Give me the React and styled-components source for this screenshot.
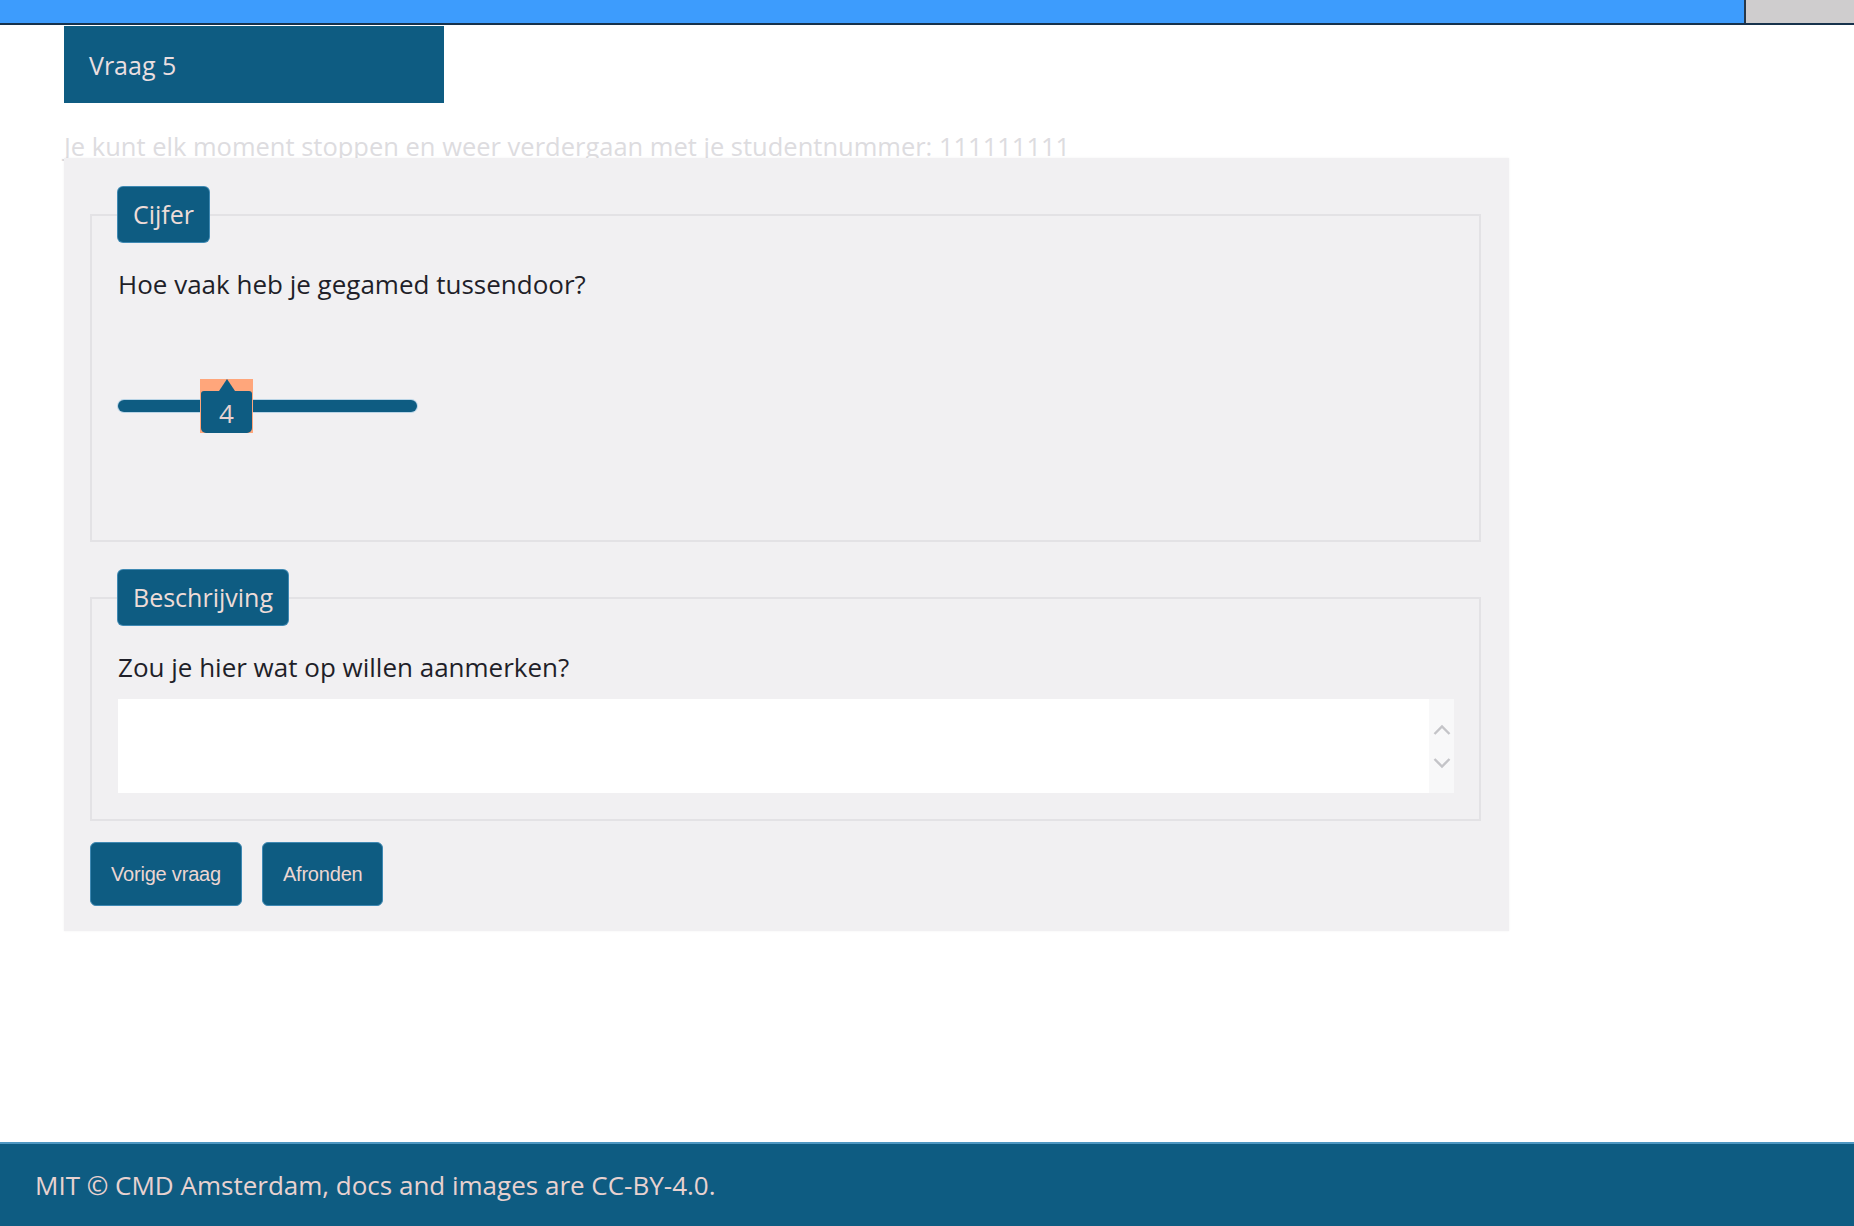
import React from "react";
import styled, { createGlobalStyle } from "styled-components";

const Global = createGlobalStyle`
  html, body { margin: 0; padding: 0; background: #ffffff; }
  body { font-family: "Open Sans", "Noto Sans", Arial, sans-serif; }
  * { box-sizing: border-box; }
`;

const BLUE = "#0e5c82";

const Page = styled.div`
  min-height: 100vh;
  display: flex;
  flex-direction: column;
`;

const Progress = styled.div`
  display: flex;
  height: 25px;
  border-bottom: 2px solid #17324c;
`;

const ProgressFill = styled.div`
  background: #3d9cfd;
  border-right: 2px solid #27384a;
`;

const ProgressRest = styled.div`
  flex: 1;
  background: #cfcdce;
`;

const Main = styled.main`
  padding: 0 0 0 64px;
  display: flex;
  flex-direction: column;
  align-items: flex-start;
`;

const QuestionHeader = styled.div`
  width: 380px;
  height: 77px;
  background: ${BLUE};
  color: #eadfe0;
  font-size: 25px;
  display: flex;
  align-items: center;
  padding-left: 25px;
  margin-top: 1px;
`;

const Notice = styled.p`
  margin: 25px 0 0;
  height: 30px;
  line-height: 36px;
  font-size: 25.5px;
  color: #dddcdf;
  white-space: nowrap;
`;

const Panel = styled.section`
  position: relative;
  width: 1445px;
  background: #f1f0f2;
  padding: 29px 28px 25px 26px;
  box-shadow: 0 0 2px rgba(0, 0, 0, 0.06);
`;

const Fieldset = styled.fieldset`
  margin: ${(p) => (p.$first ? "0" : "28px 0 0")};
  border: 2px solid #e3e2e5;
  padding: 24px 25px ${(p) => p.$bottom}px 26px;
  min-width: 0;
`;

const Legend = styled.legend`
  background: ${BLUE};
  color: #eedcd8;
  font-size: 25px;
  line-height: 35px;
  padding: 10px 15px;
  border-radius: 5px;
  box-shadow: 0 0 0 1px #3f89b3;
  margin: 0;
`;

const Question = styled.p`
  margin: 0;
  font-size: 26px;
  line-height: 36px;
  color: #1f1f29;
`;

const SliderArea = styled.div`
  margin-top: 77px;
  height: 54px;
  width: 299px;
  display: flex;
  align-items: center;
  position: relative;
`;

const Track = styled.div`
  width: 100%;
  height: 12px;
  border-radius: 6px;
  background: ${BLUE};
  box-shadow: 0 0 0 1px rgba(80, 160, 210, 0.35);
`;

const Thumb = styled.div`
  position: absolute;
  top: 0;
  width: 53px;
  height: 54px;
  background: #ffa67b;
  display: flex;
  flex-direction: column;
  justify-content: flex-end;
  align-items: center;
`;

const ThumbArrow = styled.div`
  width: 0;
  height: 0;
  border-left: 8px solid transparent;
  border-right: 8px solid transparent;
  border-bottom: 12px solid ${BLUE};
`;

const ThumbBox = styled.div`
  width: 51px;
  height: 42px;
  background: ${BLUE};
  border-radius: 3px 3px 5px 5px;
  color: #e8d2d0;
  font-size: 26px;
  display: flex;
  align-items: center;
  justify-content: center;
  padding-top: 2px;
`;

const TextareaWrap = styled.div`
  margin-top: 14px;
  height: 94px;
  display: flex;
  background: #ffffff;
`;

const TextArea = styled.textarea`
  flex: 1;
  border: none;
  outline: none;
  resize: none;
  background: transparent;
  font-family: inherit;
  font-size: 24px;
  padding: 6px 10px;
  overflow: hidden;
`;

const ScrollColumn = styled.div`
  width: 25px;
  background: #f8f8f9;
  display: flex;
  flex-direction: column;
  align-items: center;
  justify-content: center;
  gap: 23px;
`;

const Buttons = styled.div`
  display: flex;
  gap: 20px;
  margin-top: 21px;
`;

const Button = styled.button`
  height: 64px;
  padding: 0 20px;
  background: ${BLUE};
  color: #ecd6d2;
  font-family: "Liberation Sans", Arial, sans-serif;
  font-size: 20px;
  letter-spacing: -0.2px;
  border: 1px solid #3f89b3;
  border-radius: 6px;
  cursor: pointer;
`;

const Footer = styled.footer`
  margin-top: auto;
  height: 84px;
  background: ${BLUE};
  border-top: 2px solid #4e97c2;
  display: flex;
  align-items: center;
  padding-left: 35px;
  color: #e8d2d0;
  font-size: 26px;
`;

const Chevron = ({ up }) => (
  <svg width="18" height="11" viewBox="0 0 18 11">
    <path
      d={up ? "M1.5 10 L9 2.5 L16.5 10" : "M1.5 1 L9 8.5 L16.5 1"}
      fill="none"
      stroke="#c4c4c8"
      strokeWidth="2.4"
    />
  </svg>
);

const Slider = ({ min, max, value }) => {
  const ratio = (value - min) / (max - min);
  return (
    <SliderArea>
      <Track />
      <Thumb style={{ left: `${ratio * (299 - 53)}px` }}>
        <ThumbArrow />
        <ThumbBox>{value}</ThumbBox>
      </Thumb>
    </SliderArea>
  );
};

export default function App() {
  return (
    <Page>
      <Global />
      <Progress>
        <ProgressFill style={{ width: `${(1746 / 1854) * 100}%` }} />
        <ProgressRest />
      </Progress>
      <Main>
        <QuestionHeader>Vraag 5</QuestionHeader>
        <Notice>
          Je kunt elk moment stoppen en weer verdergaan met je studentnummer: 111111111
        </Notice>
        <Panel>
          <Fieldset $first $bottom={107}>
            <Legend>Cijfer</Legend>
            <Question>Hoe vaak heb je gegamed tussendoor?</Question>
            <Slider min={1} max={10} value={4} />
          </Fieldset>
          <Fieldset $bottom={26}>
            <Legend>Beschrijving</Legend>
            <Question>Zou je hier wat op willen aanmerken?</Question>
            <TextareaWrap>
              <TextArea aria-label="Beschrijving" />
              <ScrollColumn>
                <Chevron up />
                <Chevron />
              </ScrollColumn>
            </TextareaWrap>
          </Fieldset>
          <Buttons>
            <Button>Vorige vraag</Button>
            <Button>Afronden</Button>
          </Buttons>
        </Panel>
      </Main>
      <Footer>MIT © CMD Amsterdam, docs and images are CC-BY-4.0.</Footer>
    </Page>
  );
}
